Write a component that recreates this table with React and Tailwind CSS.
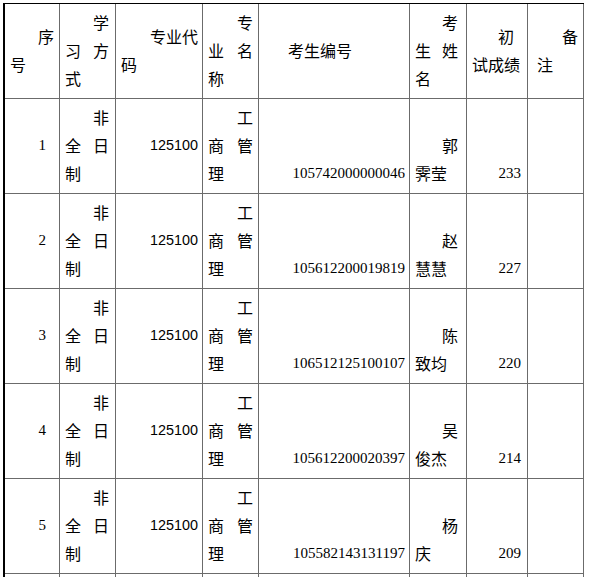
const CJK = "font-['Noto_Sans_CJK_SC',sans-serif] text-[16px]"
const SERIF = "font-['Liberation_Serif',serif] text-[15px]"
const SANS = "font-['Liberation_Sans',Arial,sans-serif] text-[14.4px]"

const W = ['w-[55px]', 'w-[56px]', 'w-[87px]', 'w-[56px]', 'w-[151px]', 'w-[57px]', 'w-[61px]', 'w-[56px]']

const rows = [
  { no: '1', id: '105742000000046', surname: '郭', given: '霁莹', score: '233' },
  { no: '2', id: '105612200019819', surname: '赵', given: '慧慧', score: '227' },
  { no: '3', id: '106512125100107', surname: '陈', given: '致均', score: '220' },
  { no: '4', id: '105612200020397', surname: '吴', given: '俊杰', score: '214' },
  { no: '5', id: '105582143131197', surname: '杨', given: '庆', score: '209' },
]

function Cell({ i, children }) {
  return (
    <div className={`${W[i]} shrink-0 h-full border-r border-[#6b6b6b] flex flex-col justify-center pb-[2px]`}>
      {children}
    </div>
  )
}

// one text line of a cell
function L({ className = '', children }) {
  return <div className={`h-[28px] leading-[28px] whitespace-nowrap ${className}`}>{children}</div>
}

function Pair({ a, b, pl, pr }) {
  return (
    <L className={`flex justify-between ${pl} ${pr}`}>
      <span>{a}</span>
      <span>{b}</span>
    </L>
  )
}

export default function App() {
  return (
    <div className="w-[592px] h-[577px] overflow-hidden bg-white text-black">
      <div className={`ml-[3px] mt-[3px] w-[581px] border-l-2 border-t border-black ${CJK}`}>
        {/* header */}
        <div className="flex h-[95px] border-b border-[#6b6b6b]">
          <Cell i={0}>
            <L className="text-right pr-[5px]">序</L>
            <L className="pl-[5px]">号</L>
          </Cell>
          <Cell i={1}>
            <L className="text-right pr-[6px]">学</L>
            <Pair a="习" b="方" pl="pl-[5px]" pr="pr-[6px]" />
            <L className="pl-[5px]">式</L>
          </Cell>
          <Cell i={2}>
            <L className="text-right pr-[4px]">专业代</L>
            <L className="pl-[5px]">码</L>
          </Cell>
          <Cell i={3}>
            <L className="text-right pr-[5px]">专</L>
            <Pair a="业" b="名" pl="pl-[5px]" pr="pr-[5px]" />
            <L className="pl-[5px]">称</L>
          </Cell>
          <Cell i={4}>
            <L className="pl-[29px]">考生编号</L>
          </Cell>
          <Cell i={5}>
            <L className="text-right pr-[8px]">考</L>
            <Pair a="生" b="姓" pl="pl-[5px]" pr="pr-[8px]" />
            <L className="pl-[5px]">名</L>
          </Cell>
          <Cell i={6}>
            <L className="text-right pr-[13px]">初</L>
            <L className="pl-[5px]">试成绩</L>
          </Cell>
          <Cell i={7}>
            <L className="text-right pr-[5px]">备</L>
            <L className="pl-[9px]">注</L>
          </Cell>
        </div>

        {rows.map(r => (
          <div key={r.no} className="flex h-[95px] border-b border-[#6b6b6b]">
            <Cell i={0}>
              <L className={`text-right pr-[13px] ${SERIF}`}>{r.no}</L>
            </Cell>
            <Cell i={1}>
              <L className="text-right pr-[6px]">非</L>
              <Pair a="全" b="日" pl="pl-[5px]" pr="pr-[6px]" />
              <L className="pl-[5px]">制</L>
            </Cell>
            <Cell i={2}>
              <L className={`text-right pr-[4px] ${SANS}`}>125100</L>
            </Cell>
            <Cell i={3}>
              <L className="text-right pr-[5px]">工</L>
              <Pair a="商" b="管" pl="pl-[5px]" pr="pr-[5px]" />
              <L className="pl-[5px]">理</L>
            </Cell>
            <Cell i={4}>
              <L />
              <L />
              <L className={`text-right pr-[4px] ${SERIF}`}>{r.id}</L>
            </Cell>
            <Cell i={5}>
              <L />
              <L className="text-right pr-[8px]">{r.surname}</L>
              <L className="pl-[5px]">{r.given}</L>
            </Cell>
            <Cell i={6}>
              <L />
              <L />
              <L className={`text-right pr-[6px] ${SERIF}`}>{r.score}</L>
            </Cell>
            <Cell i={7} />
          </div>
        ))}

        {/* next row, cut off by the window */}
        <div className="flex h-[30px]">
          {W.map((_, i) => <Cell key={i} i={i} />)}
        </div>
      </div>
    </div>
  )
}
